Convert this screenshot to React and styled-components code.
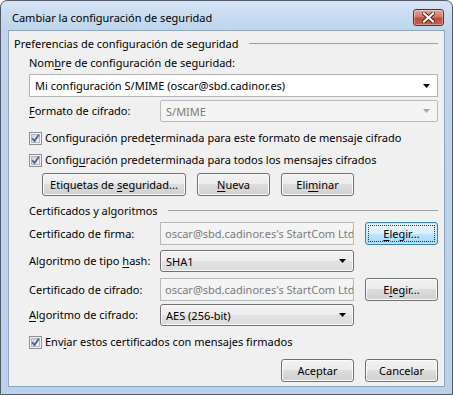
import React from 'react'
import styled, { createGlobalStyle, css } from 'styled-components'

const GlobalStyle = createGlobalStyle`
  html, body { margin: 0; padding: 0; background: #fff; }
  body {
    font-family: "Noto Sans", "Open Sans", sans-serif;
    font-size: 11px;
    color: #000;
  }
`

const Frame = styled.div`
  width: 453px;
  height: 395px;
  box-sizing: border-box;
  border: 1px solid #525b66;
  border-radius: 7px 7px 0 0;
  background: linear-gradient(#d3e3f4, #bed5ec 28px, #b9d1ea);
  display: flex;
  flex-direction: column;
  padding: 0 7px 7px 7px;
`

const TitleBar = styled.div`
  height: 29px;
  display: flex;
  align-items: flex-start;
  justify-content: space-between;
  flex-shrink: 0;
`

const Caption = styled.div`
  margin: 9px 0 0 4px;
  line-height: 16px;
  font-size: 11px;
  color: #000;
`

const CloseButton = styled.div`
  margin: 8px 1px 0 0;
  width: 31px;
  height: 17px;
  box-sizing: border-box;
  border: 1px solid #6e2a22;
  border-radius: 3px;
  background: linear-gradient(#e8a597 0%, #d67a6a 45%, #c24b3b 55%, #c8604c 100%);
  box-shadow: inset 0 0 0 1px rgba(255, 255, 255, 0.35);
  display: flex;
  align-items: center;
  justify-content: center;
`

const Client = styled.div`
  flex: 1;
  background: #f0f0f0;
  border: 1px solid #90a6bd;
  padding: 5px 6px 0 5px;
  display: flex;
  flex-direction: column;
`

const Header = styled.div`
  display: flex;
  align-items: center;
  gap: 10px;
  height: 16px;
  line-height: 16px;
  margin-top: ${p => p.$mt || 0}px;
`

const Rule = styled.div`
  flex: 1;
  height: 1px;
  background: #a0a0a0;
  margin-top: -1px;
`

const Indent = styled.div`
  padding-left: 15px;
  display: flex;
  flex-direction: column;
`

const Label = styled.div`
  height: 16px;
  line-height: 16px;
  margin-top: ${p => p.$mt || 0}px;
  white-space: nowrap;
`

const Key = styled.span`
  text-decoration: underline;
  text-underline-offset: 2px;
`

const Combo = styled.div`
  box-sizing: border-box;
  height: ${p => p.$h || 22}px;
  display: flex;
  align-items: center;
  justify-content: space-between;
  padding: 0 7px 0 5px;
  white-space: nowrap;
  margin-top: ${p => p.$mt || 0}px;
  ${p => p.$variant === 'white' && css`
    border: 1px solid #b4b4b4;
    background: #fff;
  `}
  ${p => p.$variant === 'disabled' && css`
    border: 1px solid #b8bcbf;
    border-radius: 2px;
    background: #f4f4f4;
    color: #7a7a7a;
  `}
  ${p => p.$variant === 'button' && css`
    border: 1px solid #707070;
    border-radius: 3px;
    background: linear-gradient(#f4f4f4 0%, #ececec 50%, #e2e2e2 50%, #dcdcdc 100%);
    box-shadow: inset 0 0 0 1px #fbfbfb;
  `}
`

const TextField = styled.div`
  box-sizing: border-box;
  height: 23px;
  display: flex;
  align-items: center;
  padding: 0 4px;
  border: 1px solid #b5b9bc;
  background: #f4f4f4;
  color: #7a7a7a;
  white-space: nowrap;
  overflow: hidden;
`

const FormRow = styled.div`
  display: grid;
  grid-template-columns: ${p => p.$wide ? '131px 278px' : '131px 194px 84px'};
  align-items: center;
  margin-top: ${p => p.$mt || 0}px;
`

const CheckRow = styled.div`
  display: flex;
  align-items: center;
  gap: 3px;
  height: 16px;
  line-height: 16px;
  margin-top: ${p => p.$mt || 0}px;
`

const ButtonRow = styled.div`
  display: flex;
  gap: 11px;
  margin-top: ${p => p.$mt || 0}px;
  justify-content: ${p => p.$end ? 'flex-end' : 'flex-start'};
  padding-left: ${p => p.$pl || 0}px;
`

const Button = styled.div`
  position: relative;
  box-sizing: border-box;
  width: ${p => p.$w || 73}px;
  height: 23px;
  display: flex;
  align-items: center;
  justify-content: center;
  justify-self: end;
  border: 1px solid #707070;
  border-radius: 3px;
  background: linear-gradient(#f2f2f2 0%, #ebebeb 50%, #dddddd 50%, #cfcfcf 100%);
  box-shadow: inset 0 0 0 1px #fcfcfc;
  white-space: nowrap;
  ${p => p.$focused && css`
    border-color: #3c7fb1;
    background: linear-gradient(#eaf6fd 0%, #d9f0fc 50%, #bee6fd 50%, #a7d9f5 100%);
    box-shadow: inset 0 0 0 1px #c5e6f8;
    &::after {
      content: '';
      position: absolute;
      inset: 2px;
      border: 1px dotted #333;
    }
  `}
`

const Arrow = ({ color = '#000' }) => (
  <svg width="7" height="4" viewBox="0 0 7 4">
    <path d="M0 0h7L3.5 4z" fill={color} />
  </svg>
)

const CheckBox = () => (
  <svg width="13" height="13" viewBox="0 0 13 13">
    <defs>
      <linearGradient id="cbIn" x1="0" y1="0" x2="1" y2="1">
        <stop offset="0" stopColor="#cbcfd5" />
        <stop offset="1" stopColor="#f7f7f7" />
      </linearGradient>
    </defs>
    <rect x="0.5" y="0.5" width="12" height="12" fill="#f4f4f4" stroke="#8e8f8f" />
    <rect x="2.5" y="2.5" width="8" height="8" fill="url(#cbIn)" stroke="#b3b7bd" />
    <path d="M3.2 6.2l2.3 2.9L9.8 2.8" fill="none" stroke="#4a5f97" strokeWidth="1.8" />
  </svg>
)

const CloseGlyph = () => (
  <svg width="13" height="11" viewBox="0 0 13 11">
    <path d="M2 1.5l9 8M11 1.5l-9 8" stroke="#5a1e17" strokeWidth="4" strokeLinecap="square" />
    <path d="M2 1.5l9 8M11 1.5l-9 8" stroke="#fff" strokeWidth="2.2" strokeLinecap="square" />
  </svg>
)

export default function App() {
  return (
    <>
      <GlobalStyle />
      <Frame>
        <TitleBar>
          <Caption>Cambiar la configuración de seguridad</Caption>
          <CloseButton><CloseGlyph /></CloseButton>
        </TitleBar>
        <Client>
          <Header>
            <span>Preferencias de configuración de seguridad</span>
            <Rule />
          </Header>
          <Indent>
            <Label $mt={3}>Nom<Key>b</Key>re de configuración de seguridad:</Label>
            <Combo $variant="white" $h={23} $mt={3}>
              <span>Mi configuración S/MIME (oscar@sbd.cadinor.es)</span>
              <Arrow />
            </Combo>
            <FormRow $wide $mt={3}>
              <Label><Key>F</Key>ormato de cifrado:</Label>
              <Combo $variant="disabled">
                <span>S/MIME</span>
                <Arrow color="#a8a8a8" />
              </Combo>
            </FormRow>
            <CheckRow $mt={8}>
              <CheckBox />
              <span>Configuración prede<Key>t</Key>erminada para este formato de mensaje cifrado</span>
            </CheckRow>
            <CheckRow $mt={6}>
              <CheckBox />
              <span>Config<Key>u</Key>ración predeterminada para todos los mensajes cifrados</span>
            </CheckRow>
            <ButtonRow $mt={5} $pl={13}>
              <Button $w={144}><span>Etiquetas de <Key>s</Key>eguridad...</span></Button>
              <Button><span><Key>N</Key>ueva</span></Button>
              <Button><span>Eli<Key>m</Key>inar</span></Button>
            </ButtonRow>
            <Header $mt={7}>
              <span>Certificados y algoritmos</span>
              <Rule />
            </Header>
            <FormRow $mt={3}>
              <Label>Certificado de firma:</Label>
              <TextField>oscar@sbd.cadinor.es's StartCom Ltd</TextField>
              <Button $focused><span><Key>E</Key>legir...</span></Button>
            </FormRow>
            <FormRow $mt={5}>
              <Label>Algoritmo de tipo <Key>h</Key>ash:</Label>
              <Combo $variant="button">
                <span>SHA1</span>
                <Arrow />
              </Combo>
            </FormRow>
            <FormRow $mt={6}>
              <Label>Certificado de cifrado:</Label>
              <TextField>oscar@sbd.cadinor.es's StartCom Ltd</TextField>
              <Button><span>E<Key>l</Key>egir...</span></Button>
            </FormRow>
            <FormRow $mt={3}>
              <Label><Key>A</Key>lgoritmo de cifrado:</Label>
              <Combo $variant="button">
                <span>AES (256-bit)</span>
                <Arrow />
              </Combo>
            </FormRow>
            <CheckRow $mt={8}>
              <CheckBox />
              <span>Env<Key>i</Key>ar estos certificados con mensajes firmados</span>
            </CheckRow>
            <ButtonRow $mt={9} $end>
              <Button><span>Aceptar</span></Button>
              <Button><span>Cancelar</span></Button>
            </ButtonRow>
          </Indent>
        </Client>
      </Frame>
    </>
  )
}
